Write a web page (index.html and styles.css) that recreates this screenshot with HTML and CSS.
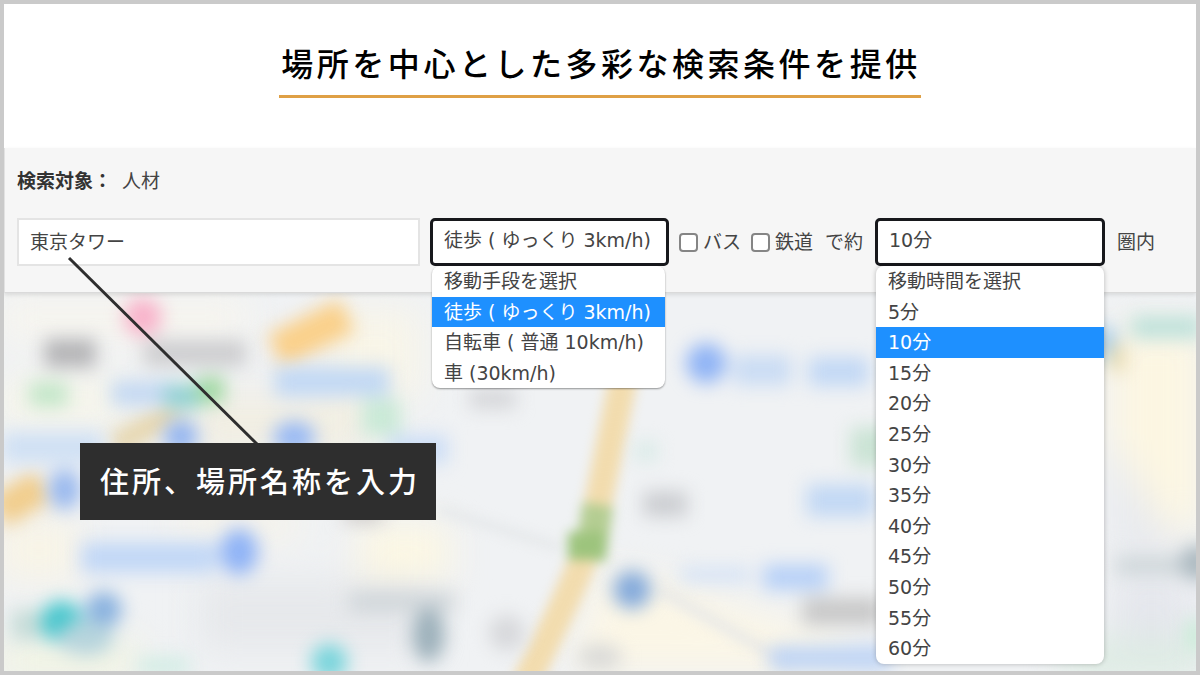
FILE: index.html
```html
<!DOCTYPE html>
<html lang="ja">
<head>
    <meta charset="UTF-8">
    <meta name="viewport" content="width=device-width, initial-scale=1.0">
    <title>場所を中心とした多彩な検索条件を提供</title>
    <link rel="stylesheet" href="styles.css">
</head>
<body>

    <header class="page-header">
        <h1>場所を中心とした多彩な検索条件を提供</h1>
    </header>

    <form class="search-panel">
        <p class="target"><strong>検索対象：</strong><span>人材</span></p>

        <div class="search-row">
            <div class="field place">
                <input type="text" id="place" name="place" value="東京タワー" aria-label="住所、場所名称">
                <div class="callout">
                    <svg class="callout-line" viewBox="0 0 192 188" aria-hidden="true">
                        <path d="M2 2 L190 188" stroke="#2e2e2e" stroke-width="3" fill="none"/>
                    </svg>
                    <p class="callout-label">住所、場所名称を入力</p>
                </div>
            </div>

            <div class="field transport">
                <select id="transport" name="transport" aria-label="移動手段">
                    <option>移動手段を選択</option>
                    <option selected>徒歩 ( ゆっくり 3km/h)</option>
                    <option>自転車 ( 普通 10km/h)</option>
                    <option>車 (30km/h)</option>
                </select>
                <ul class="menu" role="listbox" aria-label="移動手段">
                    <li role="option">移動手段を選択</li>
                    <li role="option" class="selected" aria-selected="true">徒歩 ( ゆっくり 3km/h)</li>
                    <li role="option">自転車 ( 普通 10km/h)</li>
                    <li role="option">車 (30km/h)</li>
                </ul>
            </div>

            <label class="check" for="bus"><input type="checkbox" id="bus" name="bus">バス</label>
            <label class="check" for="train"><input type="checkbox" id="train" name="train">鉄道</label>

            <label class="unit" for="minutes">で約</label>
            <div class="field minutes">
                <select id="minutes" name="minutes">
                    <option>移動時間を選択</option>
                    <option>5分</option>
                    <option selected>10分</option>
                    <option>15分</option>
                    <option>20分</option>
                    <option>25分</option>
                    <option>30分</option>
                    <option>35分</option>
                    <option>40分</option>
                    <option>45分</option>
                    <option>50分</option>
                    <option>55分</option>
                    <option>60分</option>
                </select>
                <ul class="menu menu-long" role="listbox" aria-label="移動時間">
                    <li role="option">移動時間を選択</li>
                    <li role="option">5分</li>
                    <li role="option" class="selected" aria-selected="true">10分</li>
                    <li role="option">15分</li>
                    <li role="option">20分</li>
                    <li role="option">25分</li>
                    <li role="option">30分</li>
                    <li role="option">35分</li>
                    <li role="option">40分</li>
                    <li role="option">45分</li>
                    <li role="option">50分</li>
                    <li role="option">55分</li>
                    <li role="option">60分</li>
                </ul>
            </div>
            <span class="unit">圏内</span>
        </div>
    </form>

    <main class="map">
        <svg viewBox="4 294 1192 377" preserveAspectRatio="xMidYMid slice" aria-hidden="true">
            <defs>
                <filter id="soft" filterUnits="userSpaceOnUse" x="-60" y="230" width="1320" height="500" color-interpolation-filters="sRGB">
                    <feGaussianBlur stdDeviation="9"/>
                </filter>
                <filter id="wide" filterUnits="userSpaceOnUse" x="-100" y="200" width="1400" height="560" color-interpolation-filters="sRGB">
                    <feGaussianBlur stdDeviation="18"/>
                </filter>
                <filter id="road" filterUnits="userSpaceOnUse" x="-60" y="230" width="1320" height="500" color-interpolation-filters="sRGB">
                    <feGaussianBlur stdDeviation="6"/>
                </filter>
            </defs>
            <rect x="4" y="294" width="1192" height="377" fill="#f0f2f4"/>

            <!-- land and building areas -->
            <g filter="url(#wide)">
                <rect x="0" y="300" width="250" height="40" fill="#f7f5ee"/>
                <rect x="330" y="310" width="90" height="90" fill="#f8f5e8"/>
                <rect x="0" y="380" width="130" height="45" fill="#f6f5ea"/>
                <rect x="190" y="395" width="180" height="60" fill="#f1eee2"/>
                <rect x="0" y="520" width="80" height="60" fill="#f8f4e6"/>
                <rect x="360" y="525" width="90" height="55" fill="#fcf7e3"/>
                <rect x="180" y="515" width="120" height="20" fill="#f8f3e4"/>
                <rect x="200" y="580" width="230" height="70" fill="#e6e8eb"/>
                <path d="M600 570 L700 590 L790 671 L570 671 Z" fill="#fbf6e6"/>
                <path d="M680 590 L850 640 L850 671 L740 671 Z" fill="#fbf6e6"/>
                <rect x="1110" y="330" width="90" height="200" fill="#fcf6e2"/>
                <path d="M1110 440 L1190 570 L1110 570 Z" fill="#e8eaee"/>
                <rect x="1110" y="580" width="80" height="80" fill="#e4e6ec"/>
                <rect x="1060" y="640" width="140" height="40" fill="#dcebe2"/>
                <rect x="0" y="640" width="140" height="40" fill="#f1f4e2"/>
            </g>

            <!-- roads -->
            <g filter="url(#road)" fill="none">
                <path d="M625 370 L592 535 Q580 575 525 685" stroke="#f2dcae" stroke-width="28"/>
                <path d="M598 505 L590 560" stroke="#b4cd92" stroke-width="31"/>
                <path d="M568 546 H606" stroke="#9dc47d" stroke-width="28"/>
                <path d="M440 510 L560 548" stroke="#e5e8ea" stroke-width="9"/>
                <path d="M660 590 L790 665" stroke="#eaeae7" stroke-width="12"/>
            </g>
            <g filter="url(#soft)" fill="none">
                <path d="M276 352 L348 316" stroke="#fad08a" stroke-width="36"/>
                <path d="M0 513 L45 485" stroke="#f1cd8c" stroke-width="34"/>
                <path d="M115 447 L180 410" stroke="#e6d6ae" stroke-width="24"/>
            </g>

            <!-- place names, stations and pins -->
            <g filter="url(#soft)">
                <circle cx="144" cy="318" r="19" fill="#f8b2ca"/>
                <rect x="46" y="340" width="51" height="28" fill="#b4b4b6"/>
                <rect x="145" y="341" width="102" height="26" fill="#cdcdcf"/>
                <rect x="31" y="383" width="38" height="24" fill="#c2e6c8"/>
                <rect x="113" y="382" width="64" height="24" fill="#c3d8f2"/>
                <rect x="276" y="368" width="114" height="29" fill="#c1d8f4"/>
                <rect x="166" y="386" width="36" height="23" fill="#8ed0d2"/>
                <rect x="198" y="378" width="27" height="26" fill="#9ed8a0"/>
                <rect x="4" y="433" width="100" height="30" fill="#cfe0f4"/>
                <rect x="363" y="400" width="38" height="36" fill="#c9e9d6"/>
                <ellipse cx="182" cy="437" rx="17" ry="16" fill="#92b4f0"/>
                <ellipse cx="295" cy="438" rx="21" ry="16" fill="#98b9f4"/>
                <rect x="390" y="436" width="58" height="28" fill="#cbddf6"/>
                <ellipse cx="66" cy="490" rx="16" ry="20" fill="#98b8ee"/>
                <rect x="83" y="543" width="134" height="30" fill="#c1d7f6"/>
                <ellipse cx="240" cy="552" rx="19" ry="23" fill="#8fb3f6"/>
                <rect x="345" y="508" width="38" height="14" fill="#c8c4c2"/>
                <circle cx="63" cy="622" r="21" fill="#46c6cd"/>
                <rect x="13" y="610" width="30" height="30" fill="#c6dcd8"/>
                <circle cx="105" cy="610" r="18" fill="#88b1df"/>
                <ellipse cx="87" cy="638" rx="28" ry="17" fill="#b6d4dc"/>
                <circle cx="330" cy="662" r="18" fill="#78d4db"/>
                <rect x="140" y="658" width="50" height="16" fill="#cfecE3"/>
                <rect x="350" y="592" width="105" height="20" fill="#d0d6da"/>
                <ellipse cx="429" cy="635" rx="16" ry="27" fill="#9cb0ba"/>
                <ellipse cx="507" cy="633" rx="18" ry="18" fill="#d7d8db"/>
                <ellipse cx="600" cy="657" rx="22" ry="13" fill="#dadad8"/>
                <rect x="470" y="390" width="46" height="19" fill="#d4d5d8"/>
                <rect x="643" y="492" width="44" height="25" fill="#cbcdd1"/>
                <circle cx="632" cy="590" r="19" fill="#84aadb"/>
                <circle cx="706" cy="364" r="20" fill="#90b4f5"/>
                <rect x="733" y="356" width="58" height="30" fill="#cadcf4"/>
                <rect x="808" y="358" width="60" height="29" fill="#c2d8f5"/>
                <rect x="635" y="443" width="22" height="18" fill="#d7eae6"/>
                <rect x="806" y="485" width="68" height="32" fill="#c2d8f4"/>
                <rect x="850" y="428" width="40" height="39" fill="#cae3d4"/>
                <rect x="680" y="568" width="70" height="14" fill="#d4e2f6"/>
                <rect x="763" y="565" width="64" height="25" fill="#b6d0f7"/>
                <rect x="802" y="598" width="79" height="27" fill="#c8c8c8"/>
                <rect x="770" y="646" width="120" height="24" fill="#bed4f5"/>
                <ellipse cx="1104" cy="344" rx="12" ry="18" fill="#a5ccea"/>
                <rect x="1130" y="317" width="70" height="22" fill="#bee1da"/>
                <rect x="1108" y="345" width="16" height="27" fill="#ebdcae"/>
                <rect x="1115" y="557" width="70" height="18" fill="#ced6d9"/>
                <ellipse cx="1196" cy="563" rx="18" ry="18" fill="#acb9c0"/>
                <rect x="1186" y="620" width="14" height="30" fill="#c2ecd2"/>
            </g>
        </svg>
    </main>

</body>
</html>
```

FILE: styles.css
```css
* {
    box-sizing: border-box;
}

body {
    font-family: "DejaVu Sans", "Noto Sans CJK JP", sans-serif;
    font-size: 19px;
    line-height: 30px;
    color: #444444;
    background-color: #ffffff;
    margin: 0;
    border: 4px solid #cacaca;
    display: flex;
    flex-direction: column;
    min-height: 100vh;
}

p,
ul {
    margin: 0;
    padding: 0;
}

.page-header {
    padding: 35px 20px 50px;
    text-align: center;
}

h1 {
    display: inline-block;
    vertical-align: top;
    margin: 0;
    padding: 0 0 10px 2px;
    border-bottom: 3px solid #dfa045;
    font-family: "Noto Sans CJK JP", sans-serif;
    font-size: 32px;
    font-weight: 500;
    line-height: 46px;
    letter-spacing: 0.11em;
    color: #000000;
}

.search-panel {
    position: relative;
    z-index: 1;
    padding: 18px 39px 26px 12px;
    background-color: #f6f6f6;
    border-left: 1px solid #e2e2e2;
    border-bottom: 1px solid #dadada;
    box-shadow: 0 2px 4px rgba(0, 0, 0, 0.1);
}

.target {
    display: flex;
    gap: 10px;
    margin-bottom: 22px;
}

.target strong {
    color: #333333;
}

.search-row {
    display: flex;
    align-items: center;
    gap: 10px;
}

.field {
    position: relative;
}

.place {
    flex: 1;
}

.transport {
    flex: 0 0 239px;
}

.minutes {
    flex: 0 0 230px;
}

input[type="text"],
select {
    display: block;
    width: 100%;
    height: 48px;
    margin: 0;
    padding: 0 11px 4px;
    font: inherit;
    color: #444444;
    background-color: #ffffff;
    outline: none;
}

input[type="text"] {
    border: 2px solid #e4e4e4;
}

select {
    appearance: none;
    border: 3px solid #17181c;
    border-radius: 5px;
}

.check {
    display: flex;
    align-items: center;
    gap: 5px;
    white-space: nowrap;
}

.check input {
    appearance: none;
    width: 19px;
    height: 19px;
    margin: 0;
    background-color: #ffffff;
    border: 2px solid #858585;
    border-radius: 4px;
}

.unit {
    margin: 0 2px;
    white-space: nowrap;
}

/* open drop-down lists */
.menu {
    position: absolute;
    top: 100%;
    left: 2px;
    right: 4px;
    z-index: 2;
    display: flex;
    flex-direction: column;
    height: 122px;
    list-style: none;
    background-color: #ffffff;
    border-radius: 8px;
    box-shadow: 0 1px 2px rgba(0, 0, 0, 0.4);
}

.menu-long {
    left: 1px;
    right: 1px;
    height: 398px;
    box-shadow: 0 0 5px rgba(0, 0, 0, 0.25);
}

.menu li {
    flex: 1;
    padding-left: 12px;
    white-space: nowrap;
}

.menu .selected {
    background-color: #1e90ff;
    color: #ffffff;
}

/* note that points at the place box */
.callout {
    position: absolute;
    top: 38px;
    left: 50px;
}

.callout-line {
    display: block;
    width: 192px;
    height: 188px;
}

.callout-label {
    margin: -1px 0 0 13px;
    padding: 13px 16px 16px 20px;
    background-color: #2e2e2e;
    font-family: "Noto Sans CJK JP", sans-serif;
    font-size: 29px;
    font-weight: 500;
    line-height: 48px;
    letter-spacing: 3px;
    white-space: nowrap;
    color: #ffffff;
}

.map {
    position: relative;
    flex: 1;
    min-height: 320px;
    overflow: hidden;
}

.map svg {
    position: absolute;
    width: 100%;
    height: 100%;
}
```
